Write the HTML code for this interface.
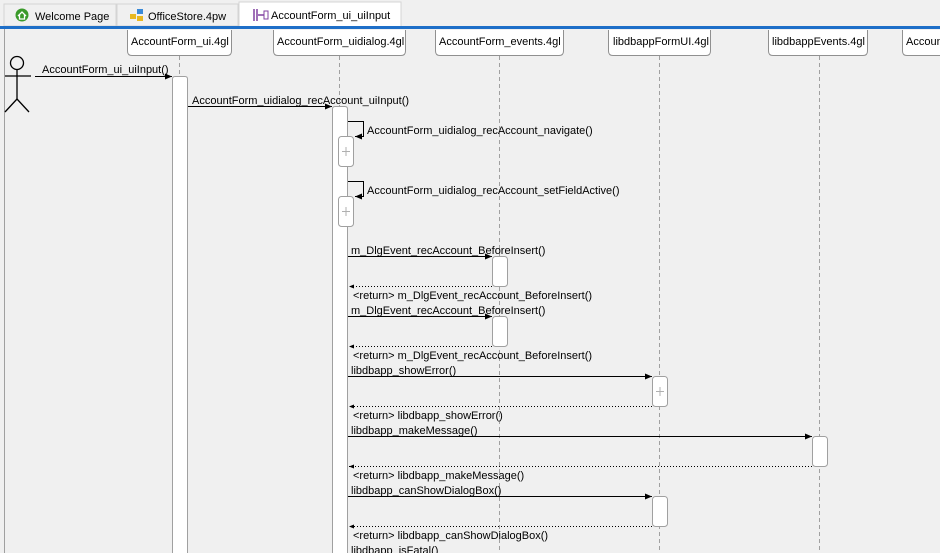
<!DOCTYPE html>
<html><head><meta charset="utf-8"><style>
html,body{margin:0;padding:0;width:940px;height:553px;overflow:hidden;background:#f0f0f0;font-family:"Liberation Sans",Tahoma,sans-serif}
svg text{font-family:"Liberation Sans",sans-serif;font-size:11px;fill:#000}
</style></head><body>
<svg width="940" height="553" xmlns="http://www.w3.org/2000/svg">
<defs>
<marker id="a" markerWidth="8" markerHeight="6" refX="7" refY="3" orient="auto" markerUnits="userSpaceOnUse"><path d="M0,0 L7,3 L0,6 Z" fill="#000"/></marker>
<marker id="r" markerWidth="6" markerHeight="4" refX="5" refY="2" orient="auto" markerUnits="userSpaceOnUse"><path d="M0,0 L5,2 L0,4 Z" fill="#000"/></marker>
</defs>
<!-- tab bar -->
<rect x="0" y="0" width="940" height="26" fill="#f0f0f0"/>
<rect x="4" y="4" width="112" height="22" fill="#f0f0f0" stroke="#d4d4d4"/>
<rect x="117" y="4" width="121" height="22" fill="#f0f0f0" stroke="#d4d4d4"/>
<rect x="239" y="2" width="162" height="25" fill="#fff" stroke="#d4d4d4"/>
<circle cx="22" cy="15" r="6.5" fill="#3a9a2a"/><path d="M18,16 L22,12 L26,16 M19.5,15 V19 H24.5 V15" stroke="#fff" fill="none" stroke-width="1.3"/>
<text x="35" y="20">Welcome Page</text>
<rect x="130" y="14" width="6" height="5" fill="#e8b820"/><rect x="137" y="9" width="6" height="5" fill="#3a8ad8"/><rect x="137" y="16" width="6" height="5" fill="#e8b820"/>
<text x="148" y="20">OfficeStore.4pw</text>
<path d="M254,9 V21 M257,9 V21 M258,15 H264" stroke="#8040a0" stroke-width="1.5"/><rect x="264" y="11" width="4" height="8" fill="none" stroke="#8040a0"/>
<text x="271" y="19">AccountForm_ui_uiInput</text>
<rect x="0" y="26" width="940" height="3" fill="#1e6fc8"/>
<line x1="4.5" y1="29" x2="4.5" y2="553" stroke="#a0a0a0"/>
<!-- lifelines -->
<g stroke="#a0a0a0" stroke-dasharray="4,3">
<line x1="179.5" y1="56" x2="179.5" y2="553"/>
<line x1="339.5" y1="56" x2="339.5" y2="553"/>
<line x1="499.5" y1="56" x2="499.5" y2="553"/>
<line x1="659.5" y1="56" x2="659.5" y2="553"/>
<line x1="819.5" y1="56" x2="819.5" y2="553"/>
</g>
<g fill="#fff" stroke="#909090">
<path d="M127.5,30 V51 Q127.5,55.5 132,55.5 H227 Q231.5,55.5 231.5,51 V30"/>
<path d="M273.5,30 V51 Q273.5,55.5 278,55.5 H401 Q405.5,55.5 405.5,51 V30"/>
<path d="M435.5,30 V51 Q435.5,55.5 440,55.5 H559 Q563.5,55.5 563.5,51 V30"/>
<path d="M608.5,30 V51 Q608.5,55.5 613,55.5 H706 Q710.5,55.5 710.5,51 V30"/>
<path d="M768.5,30 V51 Q768.5,55.5 773,55.5 H863 Q867.5,55.5 867.5,51 V30"/>
<path d="M902.5,30 V51 Q902.5,55.5 907,55.5 H945 V30"/>
</g>
<text x="131" y="45">AccountForm_ui.4gl</text>
<text x="277" y="45">AccountForm_uidialog.4gl</text>
<text x="439" y="45">AccountForm_events.4gl</text>
<text x="613" y="45">libdbappFormUI.4gl</text>
<text x="772" y="45">libdbappEvents.4gl</text>
<text x="906" y="45">AccountF</text>
<!-- actor -->
<g stroke="#000" fill="none" stroke-width="1.3">
<circle cx="17" cy="63" r="6.5"/><line x1="17" y1="69.5" x2="17" y2="99"/><line x1="5" y1="76" x2="31" y2="76"/>
<path d="M5,112 L17,99 L29,112"/></g>
<!-- activations -->
<g fill="#fff" stroke="#a0a0a0">
<path d="M172.5,553 V79 Q172.5,76.5 175,76.5 H185 Q187.5,76.5 187.5,79 V553"/>
<path d="M332.5,553 V109 Q332.5,106.5 335,106.5 H345 Q347.5,106.5 347.5,109 V553"/>
<rect x="338.5" y="136.5" width="15" height="30" rx="3"/>
<rect x="338.5" y="196.5" width="15" height="30" rx="3"/>
<rect x="492.5" y="256.5" width="15" height="30" rx="3"/>
<rect x="492.5" y="316.5" width="15" height="30" rx="3"/>
<rect x="652.5" y="376.5" width="15" height="30" rx="3"/>
<rect x="812.5" y="436.5" width="15" height="30" rx="3"/>
<rect x="652.5" y="496.5" width="15" height="30" rx="3"/>
</g>
<g stroke="#b0b0b0"><path d="M342,151.5 H350 M346,147 V156 M342,211.5 H350 M346,207 V216 M656,391.5 H664 M660,387 V396"/></g>
<!-- messages -->
<g stroke="#000" fill="none">
<line x1="35" y1="76.5" x2="172" y2="76.5" marker-end="url(#a)"/>
<line x1="188" y1="106.5" x2="332" y2="106.5" marker-end="url(#a)"/>
<path d="M348,121.5 H363.5 V136.5 H355" marker-end="url(#a)"/>
<path d="M348,181.5 H363.5 V196.5 H355" marker-end="url(#a)"/>
<line x1="348" y1="256.5" x2="492" y2="256.5" marker-end="url(#a)"/>
<line x1="348" y1="316.5" x2="492" y2="316.5" marker-end="url(#a)"/>
<line x1="348" y1="376.5" x2="652" y2="376.5" marker-end="url(#a)"/>
<line x1="348" y1="436.5" x2="812" y2="436.5" marker-end="url(#a)"/>
<line x1="348" y1="496.5" x2="652" y2="496.5" marker-end="url(#a)"/>
<line x1="348" y1="556.5" x2="652" y2="556.5"/>
</g>
<g stroke="#000" stroke-dasharray="1,2" fill="none">
<line x1="492" y1="286.5" x2="349" y2="286.5" marker-end="url(#r)"/>
<line x1="492" y1="346.5" x2="349" y2="346.5" marker-end="url(#r)"/>
<line x1="652" y1="406.5" x2="349" y2="406.5" marker-end="url(#r)"/>
<line x1="812" y1="466.5" x2="349" y2="466.5" marker-end="url(#r)"/>
<line x1="652" y1="526.5" x2="349" y2="526.5" marker-end="url(#r)"/>
</g>
<text x="42" y="73">AccountForm_ui_uiInput()</text>
<text x="192" y="104">AccountForm_uidialog_recAccount_uiInput()</text>
<text x="367" y="134">AccountForm_uidialog_recAccount_navigate()</text>
<text x="367" y="194">AccountForm_uidialog_recAccount_setFieldActive()</text>
<text x="351" y="254">m_DlgEvent_recAccount_BeforeInsert()</text>
<text x="353" y="299">&lt;return&gt; m_DlgEvent_recAccount_BeforeInsert()</text>
<text x="351" y="314">m_DlgEvent_recAccount_BeforeInsert()</text>
<text x="353" y="359">&lt;return&gt; m_DlgEvent_recAccount_BeforeInsert()</text>
<text x="351" y="374">libdbapp_showError()</text>
<text x="353" y="419">&lt;return&gt; libdbapp_showError()</text>
<text x="351" y="434">libdbapp_makeMessage()</text>
<text x="353" y="479">&lt;return&gt; libdbapp_makeMessage()</text>
<text x="351" y="494">libdbapp_canShowDialogBox()</text>
<text x="353" y="539">&lt;return&gt; libdbapp_canShowDialogBox()</text>
<text x="351" y="554">libdbapp_isFatal()</text>
</svg>
</body></html>
